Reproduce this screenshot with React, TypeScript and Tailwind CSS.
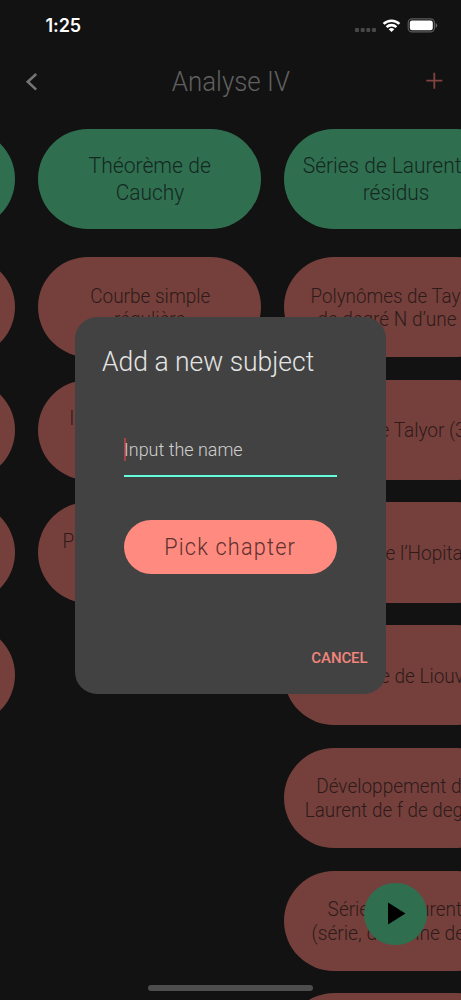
type Line = { text: string; fit: string };
type Card = { lines: Line[] };

const chapters: { head: Line[]; cards: Card[] }[] = [
  { head: [], cards: [{ lines: [] }, { lines: [] }, { lines: [] }, { lines: [] }] },
  {
    head: [
      { text: 'Théorème de', fit: 'scale-x-[0.96]' },
      { text: 'Cauchy', fit: 'scale-x-[0.95]' },
    ],
    cards: [
      { lines: [{ text: 'Courbe simple', fit: 'scale-x-[0.95]' }, { text: 'régulière', fit: 'scale-x-[0.95]' }] },
      { lines: [{ text: 'Intégrale curviligne', fit: 'scale-x-[0.95] pr-[4px]' }, { text: 'de f', fit: 'scale-x-[0.95]' }] },
      { lines: [{ text: 'Propriétés intégrale', fit: 'scale-x-[0.95] pr-[13px]' }, { text: 'curviligne', fit: 'scale-x-[0.95]' }] },
    ],
  },
  {
    head: [
      { text: 'Séries de Laurent et', fit: 'scale-x-[0.95] pr-[4px]' },
      { text: 'résidus', fit: 'scale-x-[0.95]' },
    ],
    cards: [
      { lines: [{ text: 'Polynômes de Taylor', fit: 'scale-x-[0.94]' }, { text: 'de degré N d’une f', fit: 'scale-x-[0.95] pr-[7px]' }] },
      { lines: [{ text: 'Série de Talyor (3)', fit: 'scale-x-[0.95] pl-[3px]' }] },
      { lines: [{ text: 'Règle de l’Hopital', fit: 'scale-x-[0.95]' }] },
      { lines: [{ text: 'Théorème de Liouville', fit: 'scale-x-[0.95]' }] },
      {
        lines: [
          { text: 'Développement de', fit: 'scale-x-[0.95] pr-[5px]' },
          { text: 'Laurent de f de degré', fit: 'scale-x-[0.94] pr-[9px]' },
        ],
      },
      {
        lines: [
          { text: 'Série de Laurent', fit: 'scale-x-[0.95] pr-[3px]' },
          { text: '(série, domaine de', fit: 'scale-x-[0.96] pr-[16px]' },
        ],
      },
      { lines: [] },
    ],
  },
];

function Lines({ lines }: { lines: Line[] }) {
  return (
    <>
      {lines.map((l) => (
        <span key={l.text} className={'block whitespace-nowrap ' + l.fit}>
          {l.text}
        </span>
      ))}
    </>
  );
}

function StatusBar() {
  return (
    <div className="flex h-[52px] shrink-0 items-center justify-between pl-[45.5px] pr-[23px]">
      <span className="font-['Inter'] text-[18px] leading-none font-semibold tracking-[-0.1px] text-white">1:25</span>
      <svg width="84" height="18" viewBox="354 17 84 18">
        <g fill="#484848">
          <rect x="355" y="28" width="4" height="4" rx="1" />
          <rect x="360.7" y="28" width="4" height="4" rx="1" />
          <rect x="366.3" y="28" width="4" height="4" rx="1" />
          <rect x="372" y="28" width="4" height="4" rx="1" />
        </g>
        <g fill="none" stroke="#fff" strokeWidth="2.6">
          <path d="M383.6 23.9a11.3 11.3 0 0 1 15.8 0" />
          <path d="M386.6 27.1a7 7 0 0 1 9.8 0" />
        </g>
        <path d="M388.7 29.2a4.1 4.1 0 0 1 5.6 0l-2.8 2.8z" fill="#fff" />
        <rect x="408.2" y="18.9" width="26.2" height="13" rx="3.8" fill="none" stroke="#5c5c5c" strokeWidth="1.2" />
        <rect x="409.8" y="20.5" width="23" height="9.8" rx="2.2" fill="#fff" />
        <path d="M435.7 23v5q1.5-.7 1.5-2.5t-1.5-2.5" fill="#666" />
      </svg>
    </div>
  );
}

export default function App() {
  return (
    <div className="relative flex h-[1000px] w-[461px] flex-col overflow-hidden bg-[#121212] font-['Roboto',sans-serif] font-light">
      <StatusBar />
      <header className="flex h-[76.5px] shrink-0 items-start justify-between pt-[12px] pr-[18px] pl-[22px]">
        <svg className="mt-[8px]" width="20" height="20" viewBox="22 72 20 20">
          <path d="M36.2 74 27.8 81.8 36.2 89.6" fill="none" stroke="#747474" strokeWidth="2.6" />
        </svg>
        <h1 className="mr-[6px] scale-x-[0.925] pt-[1px] text-[28px] leading-[34px] text-[#606060]">Analyse IV</h1>
        <svg className="mt-[8px]" width="18" height="18" viewBox="425 72 18 18">
          <path d="M426.3 80.7h16M434.3 72.7v16" fill="none" stroke="#81433e" strokeWidth="1.8" />
        </svg>
      </header>

      <main className="ml-[-207.7px] flex items-start gap-[23px]">
        {chapters.map((c, i) => (
          <section key={i} className="flex w-[223px] shrink-0 flex-col">
            <div className="mb-[28.2px] flex h-[100.4px] shrink-0 flex-col items-center justify-center rounded-full bg-[#2f6f50] pt-[1px] text-center text-[22px] leading-[27px] text-[#14281f]">
              <Lines lines={c.head} />
            </div>
            <div className="flex flex-col gap-[22.4px]">
              {c.cards.map((card, j) => (
                <div
                  key={j}
                  className="flex h-[100.3px] shrink-0 flex-col items-center justify-center rounded-full bg-[#75403c] pt-[2px] text-center text-[20px] leading-[23.5px] text-[#2d1a19]"
                >
                  <Lines lines={card.lines} />
                </div>
              ))}
            </div>
          </section>
        ))}
      </main>

      <button className="absolute top-[882.5px] left-[364px] flex size-[62.5px] items-center justify-center rounded-full bg-[#2f6f50]" aria-label="Play">
        <svg width="18" height="23" viewBox="0 0 18 23" className="ml-[3px]">
          <path d="M0 .5v22L17.5 11.5z" fill="#000" />
        </svg>
      </button>
      <div className="absolute top-[985px] left-[148px] h-[6px] w-[165px] rounded-full bg-[#4d4d4d]" />

      <div
        role="dialog"
        className="absolute top-[317px] left-[75px] flex h-[377px] w-[311px] flex-col rounded-[22px] bg-[#424242] pt-[28px]"
      >
        <h2 className="ml-[27px] origin-left scale-x-[0.945] text-[28px] leading-[34px] whitespace-nowrap text-[#e4e4e4]">Add a new subject</h2>
        <div className="mx-auto mt-[59px] flex h-[39px] w-[213.5px] items-start border-b-[2.5px] border-[#64ffda]">
          <span className="h-[23px] w-[2px] shrink-0 bg-[#a8423e]" />
          <span className="-ml-[2px] origin-left scale-x-[0.945] text-[19px] leading-[23px] whitespace-nowrap text-[#cfcfcf]">Input the name</span>
        </div>
        <button className="mx-auto mt-[43px] flex h-[53.5px] w-[213.5px] shrink-0 items-center justify-center rounded-full bg-[#ff8a80] pt-[2px] text-[23px] font-light text-[#5c302d]">
          <span className="block scale-x-[0.94] tracking-[1.3px]">Pick chapter</span>
        </button>
        <button className="mt-auto mr-[18.5px] mb-[26px] self-end text-[15px] leading-[20px] font-medium tracking-[-0.1px] text-[#f2857c]">
          CANCEL
        </button>
      </div>
    </div>
  );
}
